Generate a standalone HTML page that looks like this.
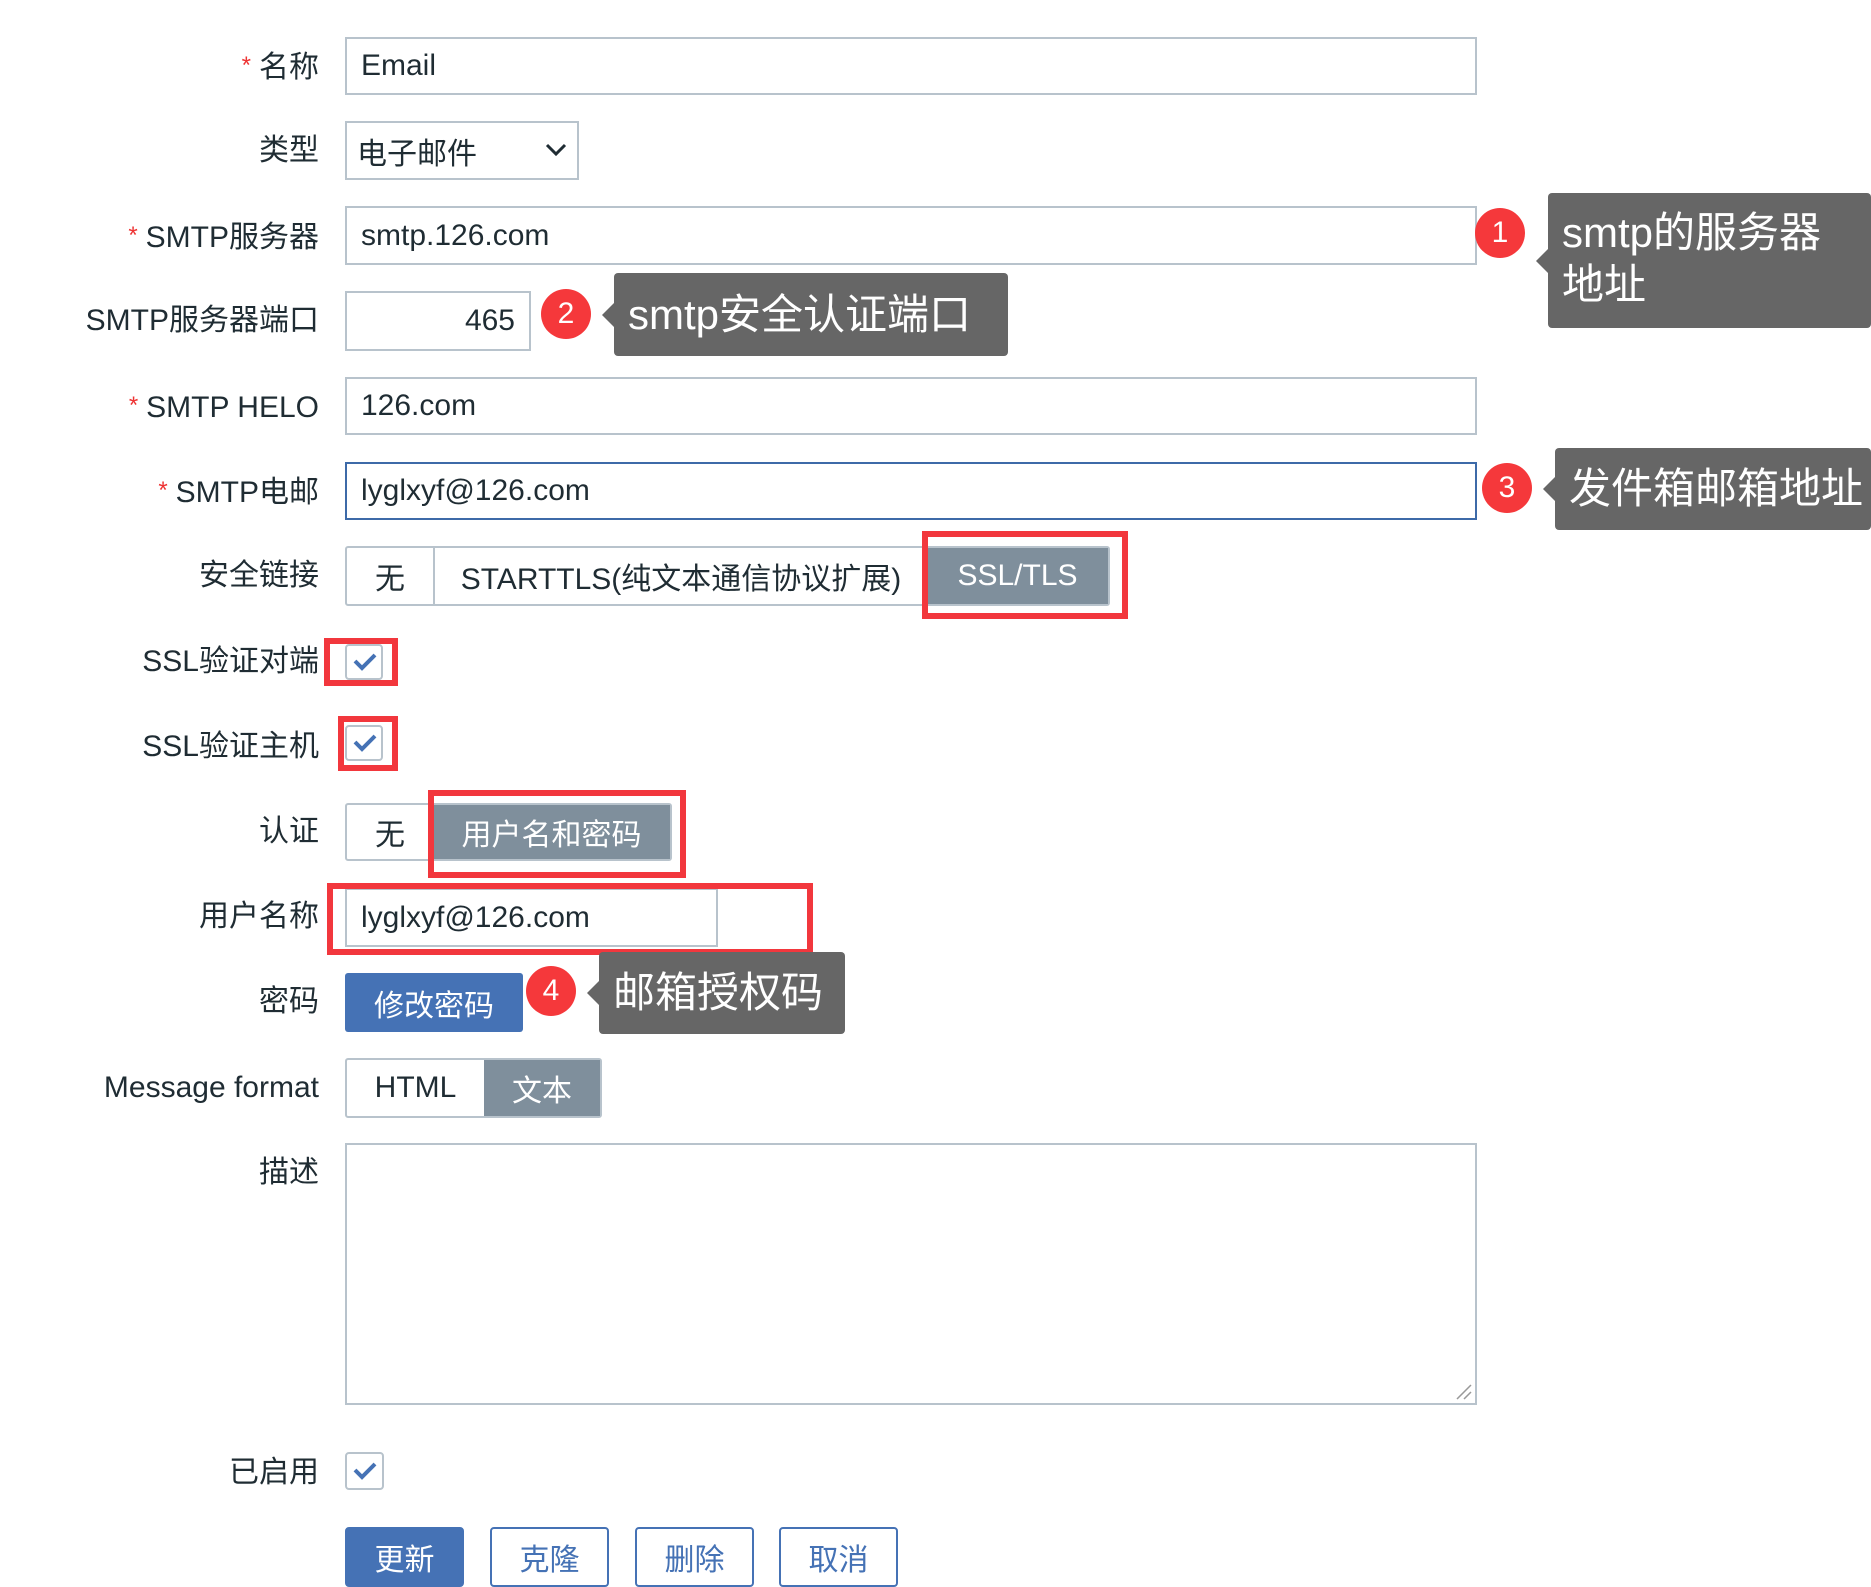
<!DOCTYPE html>
<html><head><meta charset="utf-8"><style>
*{box-sizing:border-box;margin:0;padding:0}
body{width:1871px;height:1570px;background:#fff;position:relative;overflow:hidden;font-family:"Liberation Sans","Noto Sans CJK SC",sans-serif;color:#1f2c33;font-size:30px}
.a{position:absolute}
.lbl{position:absolute;right:1552px;text-align:right;white-space:nowrap;line-height:36px}
.lbl i{color:#e33;font-style:normal;font-size:24px;margin-right:8px;vertical-align:4px}
.in{position:absolute;border:2px solid #b8c3cc;background:#fff;padding-left:14px;display:flex;align-items:center;white-space:nowrap}
.seg{position:absolute;display:flex;border:2px solid #b8c3cc;border-radius:3px;background:#fff}
.seg div{display:flex;align-items:center;justify-content:center;height:100%;white-space:nowrap}
.on{background:#7f8f9c;color:#fff}
.red{position:absolute;border:6px solid #f2373d}
.cb{position:absolute;width:38px;height:36px;border:2px solid #b8c3cc;border-radius:4px;background:#fff}
.cb svg{position:absolute;left:6px;top:6px}
.badge{position:absolute;width:50px;height:50px;border-radius:50%;background:#f5383b;color:#fff;font-size:30px;display:flex;align-items:center;justify-content:center}
.tip{position:absolute;background:#666;color:#fff;border-radius:4px;font-size:42px;padding-left:14px;line-height:52px}
.tip:before{content:"";position:absolute;left:-12px;top:50%;margin-top:-12px;border:12px solid transparent;border-left:0;border-right-color:#666}
.btn{position:absolute;border:2px solid #4572b5;border-radius:4px;color:#4572b5;display:flex;justify-content:center;padding-top:6px;font-size:30px;background:#fff}
</style></head><body>

<div class="lbl" style="top:48px"><i>*</i>名称</div>
<div class="in" style="left:345px;top:37px;width:1132px;height:58px">Email</div>

<div class="lbl" style="top:133px">类型</div>
<div class="in" style="left:345px;top:121px;width:234px;height:59px;padding-left:10px">电子邮件
<svg class="a" style="left:198px;top:20px" width="22" height="14"><path d="M2 2l9 9 9-9" fill="none" stroke="#1f2c33" stroke-width="3"/></svg></div>

<div class="lbl" style="top:218px"><i>*</i>SMTP服务器</div>
<div class="in" style="left:345px;top:206px;width:1132px;height:59px">smtp.126.com</div>

<div class="lbl" style="top:303px">SMTP服务器端口</div>
<div class="in" style="left:345px;top:291px;width:186px;height:60px;justify-content:flex-end;padding-right:14px">465</div>

<div class="lbl" style="top:388px"><i>*</i>SMTP HELO</div>
<div class="in" style="left:345px;top:377px;width:1132px;height:58px">126.com</div>

<div class="lbl" style="top:473px"><i>*</i>SMTP电邮</div>
<div class="in" style="left:345px;top:462px;width:1132px;height:58px;border-color:#3d6aa8">lyglxyf@126.com</div>

<div class="lbl" style="top:558px">安全链接</div>
<div class="seg" style="left:345px;top:546px;width:765px;height:60px">
<div style="width:88px;border-right:2px solid #b8c3cc">无</div>
<div style="width:492px">STARTTLS(纯文本通信协议扩展)</div>
<div class="on" style="flex:1">SSL/TLS</div></div>
<div class="red" style="left:922px;top:531px;width:206px;height:88px"></div>

<div class="lbl" style="top:644px">SSL验证对端</div>
<div class="cb" style="left:345px;top:644px"><svg width="24" height="20"><path d="M2 9l7 7 13-13" fill="none" stroke="#4572b5" stroke-width="4"/></svg></div>
<div class="red" style="left:324px;top:638px;width:74px;height:48px"></div>

<div class="lbl" style="top:729px">SSL验证主机</div>
<div class="cb" style="left:345px;top:725px"><svg width="24" height="20"><path d="M2 9l7 7 13-13" fill="none" stroke="#4572b5" stroke-width="4"/></svg></div>
<div class="red" style="left:338px;top:716px;width:60px;height:55px"></div>

<div class="lbl" style="top:814px">认证</div>
<div class="seg" style="left:345px;top:803px;width:327px;height:58px">
<div style="width:86px">无</div><div class="on" style="flex:1">用户名和密码</div></div>
<div class="red" style="left:428px;top:790px;width:258px;height:88px"></div>

<div class="lbl" style="top:899px">用户名称</div>
<div class="in" style="left:345px;top:888px;width:373px;height:59px">lyglxyf@126.com</div>
<div class="red" style="left:327px;top:883px;width:486px;height:72px"></div>

<div class="lbl" style="top:984px">密码</div>
<div class="a" style="left:345px;top:973px;width:178px;height:59px;background:#4572b5;color:#fff;border-radius:3px;display:flex;align-items:center;justify-content:center;font-size:30px">修改密码</div>

<div class="lbl" style="top:1070px">Message format</div>
<div class="seg" style="left:345px;top:1058px;width:257px;height:60px">
<div style="width:137px">HTML</div><div class="on" style="flex:1">文本</div></div>

<div class="lbl" style="top:1155px">描述</div>
<div class="in" style="left:345px;top:1143px;width:1132px;height:262px">
<svg class="a" style="right:2px;bottom:2px" width="20" height="20"><path d="M18 4L4 18M18 11l-7 7" stroke="#999" stroke-width="1.5"/></svg></div>

<div class="lbl" style="top:1455px">已启用</div>
<div class="cb" style="left:345px;top:1452px;width:39px;height:38px"><svg width="24" height="22"><path d="M2 10l7 7 13-13" fill="none" stroke="#4572b5" stroke-width="4"/></svg></div>

<div class="btn" style="left:345px;top:1527px;width:119px;height:60px;background:#4572b5;color:#fff">更新</div>
<div class="btn" style="left:490px;top:1527px;width:119px;height:60px">克隆</div>
<div class="btn" style="left:635px;top:1527px;width:119px;height:60px">删除</div>
<div class="btn" style="left:779px;top:1527px;width:119px;height:60px">取消</div>

<div class="badge" style="left:1475px;top:208px">1</div>
<div class="tip" style="left:1548px;top:193px;width:323px;height:135px;padding-top:14px">smtp的服务器<br>地址</div>
<div class="badge" style="left:541px;top:289px">2</div>
<div class="tip" style="left:614px;top:273px;width:394px;height:83px;line-height:83px">smtp安全认证端口</div>
<div class="badge" style="left:1482px;top:463px">3</div>
<div class="tip" style="left:1555px;top:448px;width:316px;height:82px;line-height:82px">发件箱邮箱地址</div>
<div class="badge" style="left:526px;top:966px">4</div>
<div class="tip" style="left:599px;top:952px;width:246px;height:82px;line-height:82px">邮箱授权码</div>
</body></html>
